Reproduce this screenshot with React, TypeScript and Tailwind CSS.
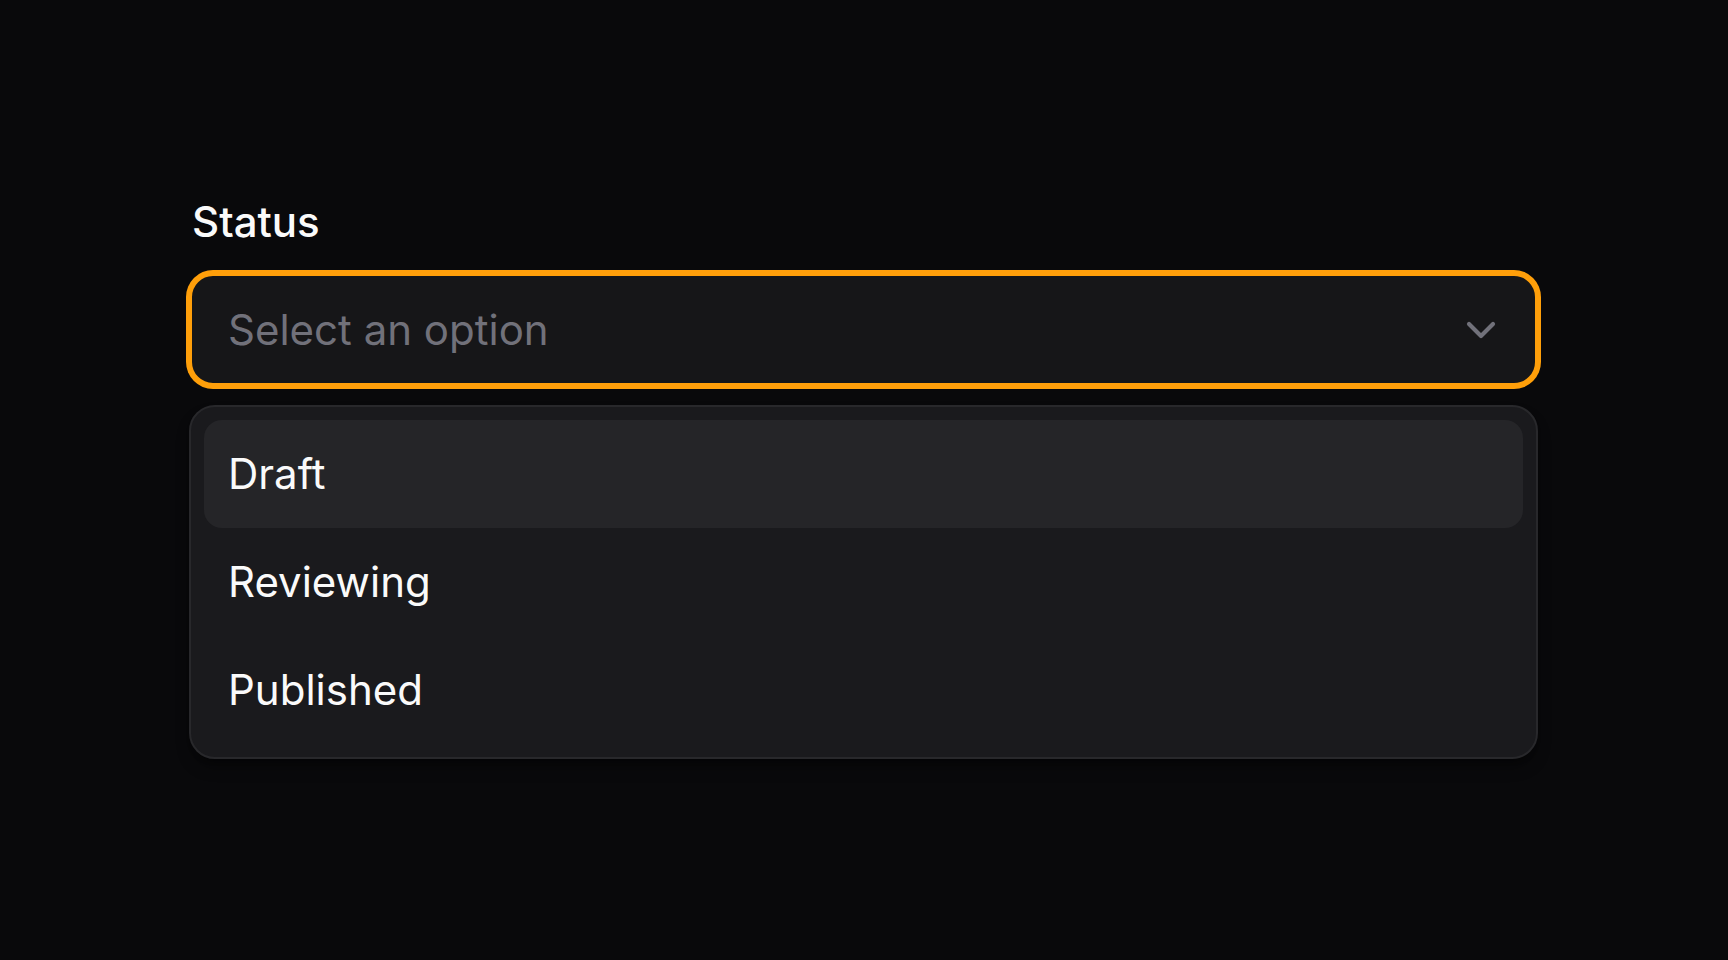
import { ChevronDown } from "lucide-react";

const options = ["Draft", "Reviewing", "Published"];

export default function App() {
  const active = "Draft";

  return (
    <div
      className="min-h-screen w-full bg-[#09090b] text-white"
      style={{ fontFamily: "Inter, 'Noto Sans', sans-serif" }}
    >
      <div className="pl-[189px] pt-[201px] w-[1538px]">
        {/* label */}
        <p className="text-[42px] leading-[42px] font-medium text-[#fafafa] pl-[3px]">Status</p>

        {/* trigger */}
        <button
          type="button"
          className="mt-[30px] flex h-[113px] w-full items-center justify-between rounded-[24px] border-[3px] border-[#ff9f0a] bg-[#161618] pl-[36px] pr-[30px] ring-[3px] ring-[#ff9f0a]"
        >
          <span className="text-[42px] leading-none text-[#71717a]">Select an option</span>
          <ChevronDown size={48} strokeWidth={2.1} className="text-[#71717a]" />
        </button>

        {/* menu */}
        <div className="mt-[19px] rounded-[26px] border-2 border-[#28282b] bg-[#1a1a1d] p-[13px] shadow-lg shadow-black/40">
          {options.map((o) => (
            <div
              key={o}
              className={`flex h-[108px] items-center rounded-[18px] pl-[24px] text-[42px] leading-none text-[#fafafa] ${
                o === active ? "bg-[#252528]" : ""
              }`}
            >
              {o}
            </div>
          ))}
        </div>
      </div>
    </div>
  );
}
